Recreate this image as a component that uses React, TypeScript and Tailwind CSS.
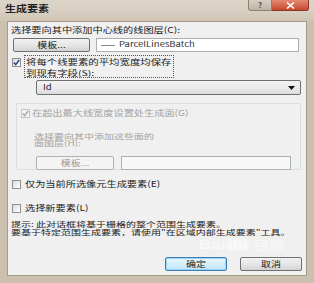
import React from "react";

const font = "font-['Noto_Sans_CJK_SC','Noto_Sans',sans-serif]";

function T({ children }: { children: React.ReactNode }) {
  return <span className="inline-block scale-y-[0.8] origin-center whitespace-nowrap">{children}</span>;
}

function Check({ checked, disabled }: { checked?: boolean; disabled?: boolean }) {
  return (
    <div
      className={`w-[9px] h-[9px] shrink-0 border ${
        disabled ? "border-[#c4c4c4] bg-[#f4f4f4]" : "border-[#8e8f8f] bg-gradient-to-br from-[#dcdcdc] to-[#ffffff]"
      } flex items-center justify-center`}
    >
      {checked && (
        <svg width="7" height="7" viewBox="0 0 7 7">
          <path
            d="M0.8 3.6 L2.7 5.6 L6.2 1"
            fill="none"
            stroke={disabled ? "#a8a8a8" : "#2a3a7a"}
            strokeWidth="1.4"
          />
        </svg>
      )}
    </div>
  );
}

function Btn({
  children,
  w,
  disabled,
  primary,
}: {
  children: React.ReactNode;
  w: string;
  disabled?: boolean;
  primary?: boolean;
}) {
  return (
    <div
      className={`${w} h-[14px] shrink-0 rounded-[2px] border flex items-center justify-center text-[10px] leading-none ${
        disabled
          ? "border-[#adb2b5] bg-[#f4f4f4] text-[#9a9a9a]"
          : primary
          ? "border-[#3c7fb1] bg-gradient-to-b from-[#eaf6fd] to-[#bee6fd] text-[#1a1a1a] shadow-[inset_0_0_0_1px_#9cd4f5]"
          : "border-[#707070] bg-gradient-to-b from-[#f2f2f2] via-[#e6e6e6] to-[#d3d3d3] text-[#1a1a1a]"
      }`}
    >
      <T>{children}</T>
    </div>
  );
}

export default function App() {
  return (
    <div
      className={`${font} relative w-[314px] h-[283px] overflow-hidden bg-[#cbbfae] text-[#1b1b1b]`}
    >
      {/* title bar */}
      <div className="h-[21px] flex items-start bg-gradient-to-b from-[#ddd5c9] via-[#d9d0c3] to-[#cfc4b4]">
        <div className="pl-[5px] pt-[1px] text-[11px] leading-[14px] font-bold text-[#222]">
          <T>生成要素</T>
        </div>
      </div>
      {/* caption buttons */}
      <div className="absolute top-0 right-[5px] flex">
        <div className="w-[24px] h-[11px] rounded-bl-[3px] border border-t-0 border-[#8c8070] bg-gradient-to-b from-[#d8cfc2] to-[#bfb3a2] flex items-center justify-center text-[8px] leading-none text-[#555] font-bold">
          ?
        </div>
        <div className="w-[37px] h-[11px] rounded-br-[3px] border border-t-0 border-l-0 border-[#8a3a2a] bg-gradient-to-b from-[#e58a73] to-[#c7452b] flex items-center justify-center">
          <svg width="9" height="7" viewBox="0 0 9 7">
            <path d="M1 0.5 L8 6.5 M8 0.5 L1 6.5" stroke="#fff" strokeWidth="1.6" />
          </svg>
        </div>
      </div>

      {/* client area */}
      <div className="mx-[7px] h-[255px] border border-[#a69b8b] bg-[#f0f0f0] pl-[3px] pr-[4px] pt-[2px] text-[10.2px] leading-[12px]">
        <div>
          <T>选择要向其中添加中心线的线图层(C):</T>
        </div>

        <div className="mt-[2px] flex items-center">
          <div className="ml-[2px]">
            <Btn w="w-[77px]">模板...</Btn>
          </div>
          <div className="ml-[6px] w-[203px] h-[14px] border border-[#abadb3] bg-white flex items-center pl-[4px] text-[9.5px] leading-none text-[#333]">
            <span className="inline-block w-[14px] h-[1px] bg-[#888] mr-[4px]" />
            <T>ParcelLinesBatch</T>
          </div>
        </div>

        <div className="mt-[3px] flex items-start">
          <div className="ml-[1px] mt-[3px]">
            <Check checked />
          </div>
          <div className="ml-[3px] w-[150px] h-[23px] border border-dotted border-[#555] pl-[1px] text-[10.4px] leading-[11px]">
            <div className="scale-y-[0.72] origin-center whitespace-nowrap">将每个线要素的平均宽度均保存</div>
            <div className="scale-y-[0.72] origin-center whitespace-nowrap">到现有字段(S):</div>
          </div>
        </div>

        <div className="mt-[2px] ml-[25px] w-[265px] h-[15px] rounded-[2px] border border-[#707070] bg-gradient-to-b from-[#f2f2f2] via-[#ebebeb] to-[#dcdcdc] flex items-center pl-[6px] pr-[5px] text-[9.5px] leading-none">
          <span className="flex-1">
            <T>Id</T>
          </span>
          <svg width="7" height="4" viewBox="0 0 7 4">
            <path d="M0 0 L7 0 L3.5 4 Z" fill="#111" />
          </svg>
        </div>

        {/* group box */}
        <div className="mt-[8px] ml-[5px] w-[285px] h-[67px] border border-[#d5dfe5] rounded-[2px] pt-[3px] text-[#a3a3a3]">
          <div className="flex items-center">
            <div className="ml-[4px]">
              <Check checked disabled />
            </div>
            <div className="ml-[2px]">
              <T>在超出最大线宽度设置处生成面(G)</T>
            </div>
          </div>
          <div className="mt-[14px] ml-[17px] text-[10px] leading-[10px] scale-y-[0.7] origin-top">
            <div>选择要向其中添加这些面的</div>
            <div>面图层(H):</div>
          </div>
          <div className="mt-[3px] ml-[19px] flex items-center">
            <Btn w="w-[78px]" disabled>
              模板...
            </Btn>
            <div className="ml-[7px] w-[170px] h-[14px] border border-[#adb2b5] bg-[#f7f7f7]" />
          </div>
        </div>

        <div className="mt-[8px] flex items-center">
          <div className="ml-[1px]">
            <Check />
          </div>
          <div className="ml-[4px]">
            <T>仅为当前所选像元生成要素(E)</T>
          </div>
        </div>

        <div className="mt-[12px] flex items-center">
          <div className="ml-[1px]">
            <Check />
          </div>
          <div className="ml-[4px]">
            <T>选择新要素(L)</T>
          </div>
        </div>

        <div className="mt-[7px] text-[10px] leading-[10px] scale-y-[0.72] origin-top">
          <div>提示: 此对话框将基于栅格的整个范围生成要素。</div>
          <div>要基于特定范围生成要素，请使用"在区域内部生成要素"工具。</div>
        </div>

        <div className="mt-[16px] flex justify-end">
          <Btn w="w-[62px]" primary>
            确定
          </Btn>
          <div className="ml-[13px]">
            <Btn w="w-[62px]">取消</Btn>
          </div>
        </div>
      </div>

      {/* watermark */}
      <div className="absolute left-[199px] top-[236px] flex items-end scale-y-[0.78] origin-center text-white/60 font-['Liberation_Sans',sans-serif] text-[17px] leading-none font-bold pointer-events-none">
        <span>Bai</span>
        <span className="ml-[1px] rounded-[3px] bg-white/30 px-[1px]">du</span>
        <span className="ml-[4px] text-[16px] font-['Noto_Sans_CJK_SC',sans-serif] font-normal">经验</span>
      </div>
    </div>
  );
}
